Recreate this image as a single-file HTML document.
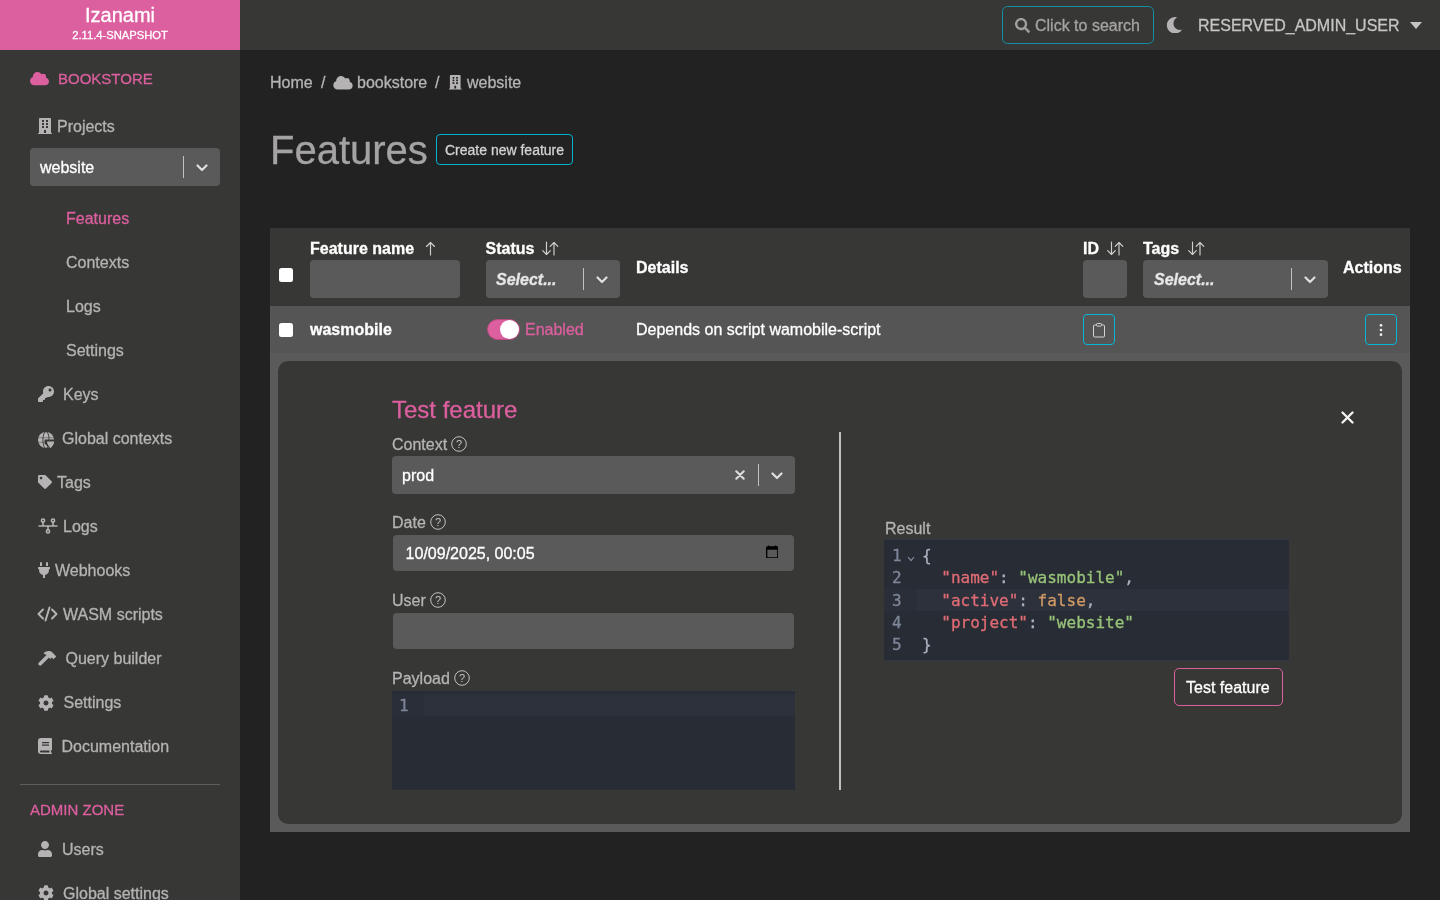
<!DOCTYPE html>
<html lang="en">
<head>
<meta charset="utf-8">
<title>Izanami</title>
<style>
*{box-sizing:border-box;margin:0;padding:0}
html,body{-webkit-text-stroke:0.300px currentColor;width:1440px;height:900px;overflow:hidden;background:#222222;font-family:"Liberation Sans",Arial,sans-serif;font-size:16px;color:#b5b3b3}
.abs{position:absolute}
#topbar{position:absolute;left:0;top:0;width:1440px;height:50px;background:#373735}
#brand{position:absolute;left:0;top:0;width:240px;height:50px;background:#dc5f9f;color:#fff;text-align:center}
#brand .n{position:absolute;left:0;width:240px;top:3px;font-size:20px;line-height:24px}
#brand .v{position:absolute;left:0;width:240px;top:28px;font-size:11.2px;line-height:14px}
#sidebar{position:absolute;left:0;top:50px;width:240px;height:850px;background:#373735}
#main{position:absolute;left:240px;top:50px;width:1200px;height:850px;background:#222222}
.t{position:absolute;white-space:nowrap;line-height:20px;height:20px}
.pink{color:#dc5f9f}
.w{color:#fff}
.b{font-weight:bold}
.ic{position:absolute;fill:#b5b3b3}
.inp{position:absolute;background:#5a5a5a;border-radius:4px}
.sep{position:absolute;width:1px;background:#c0c0c0}

.mono{font-family:"DejaVu Sans Mono","Liberation Mono",monospace;font-size:16px;line-height:22.400px;height:22.400px;white-space:pre}
.g{color:#7d8799}.f{color:#7d8799;font-size:11px}.p{color:#abb2bf}.k{color:#e06c75}.s{color:#98c379}.o{color:#d19a66}
#sb,#mn,#topbar{will-change:transform}
</style>
</head>
<body>
<div id="topbar">
  <div id="brand"><div class="n">Izanami</div><div class="v">2.11.4-SNAPSHOT</div></div>

  <div class="abs" style="left:1002px;top:6px;width:152px;height:38px;border:1px solid #148fa5;border-radius:5.500px"></div>
  <svg class="ic" style="left:1015px;top:18px;fill:#a09e9e" width="15" height="15" viewBox="0 0 512 512"><path d="M505 442.700L405.300 343c-4.500-4.500-10.600-7-17-7H372c27.600-35.300 44-79.700 44-128C416 93.100 322.900 0 208 0S0 93.100 0 208s93.100 208 208 208c48.300 0 92.700-16.400 128-44v16.300c0 6.400 2.500 12.500 7 17l99.700 99.700c9.400 9.400 24.600 9.400 33.900 0l28.300-28.300c9.400-9.400 9.400-24.600.1-34zM208 336c-70.700 0-128-57.200-128-128 0-70.700 57.200-128 128-128 70.700 0 128 57.200 128 128 0 70.700-57.200 128-128 128z"/></svg>
  <div class="t" style="left:1035px;top:16px;color:#a5a3a3">Click to search</div>
  <svg class="ic" style="left:1166.300px;top:16.700px" width="16.500" height="16.500" viewBox="0 0 512 512"><path d="M283.211 512c78.962 0 151.079-35.925 198.857-94.792 7.068-8.708-.639-21.430-11.562-19.350-124.203 23.654-238.262-71.576-238.262-196.954 0-72.222 38.662-138.635 101.498-174.394 9.686-5.512 7.250-20.197-3.756-22.230A258.156 258.156 0 0 0 283.211 0c-141.309 0-256 114.511-256 256 0 141.309 114.511 256 256 256z"/></svg>
  <div class="t" style="left:1198px;top:16px;color:#c6c4c4">RESERVED_ADMIN_USER</div>
  <div class="abs" style="left:1410px;top:22px;width:0;height:0;border-left:6px solid transparent;border-right:6px solid transparent;border-top:7px solid #c6c4c4"></div>
</div>
<div id="sidebar"></div>
<div id="sb">
<svg class="ic" style="left:30px;top:71px;fill:#dc5f9f" width="19" height="15.2" viewBox="0 0 640 512"><path d="M0 336c0 79.500 64.500 144 144 144H512c70.700 0 128-57.300 128-128c0-61.900-44-113.600-102.400-125.400c4.100-10.700 6.400-22.400 6.400-34.600c0-53-43-96-96-96c-19.700 0-38.100 6-53.300 16.200C367 64.200 315.300 32 256 32C167.600 32 96 103.600 96 192c0 2.700 .1 5.400 .2 8.100C40.200 219.800 0 273.200 0 336z"/></svg>
<div class="t pink" style="left:58px;top:68.500px;font-size:15px">BOOKSTORE</div>
<svg class="ic" style="left:38px;top:118px" width="14" height="16" viewBox="0 0 448 512"><path d="M436 480h-20V24c0-13.255-10.745-24-24-24H56C42.745 0 32 10.745 32 24v456H12c-6.627 0-12 5.373-12 12v20h448v-20c0-6.627-5.373-12-12-12zM128 76c0-6.627 5.373-12 12-12h40c6.627 0 12 5.373 12 12v40c0 6.627-5.373 12-12 12h-40c-6.627 0-12-5.373-12-12V76zm0 96c0-6.627 5.373-12 12-12h40c6.627 0 12 5.373 12 12v40c0 6.627-5.373 12-12 12h-40c-6.627 0-12-5.373-12-12v-40zm52 148h-40c-6.627 0-12-5.373-12-12v-40c0-6.627 5.373-12 12-12h40c6.627 0 12 5.373 12 12v40c0 6.627-5.373 12-12 12zm76 160h-64v-84c0-6.627 5.373-12 12-12h40c6.627 0 12 5.373 12 12v84zm64-172c0 6.627-5.373 12-12 12h-40c-6.627 0-12-5.373-12-12v-40c0-6.627 5.373-12 12-12h40c6.627 0 12 5.373 12 12v40zm0-96c0 6.627-5.373 12-12 12h-40c-6.627 0-12-5.373-12-12v-40c0-6.627 5.373-12 12-12h40c6.627 0 12 5.373 12 12v40zm0-96c0 6.627-5.373 12-12 12h-40c-6.627 0-12-5.373-12-12V76c0-6.627 5.373-12 12-12h40c6.627 0 12 5.373 12 12v40z"/></svg>
<div class="t " style="left:57px;top:117px;">Projects</div>
<div class="inp" style="left:30px;top:148px;width:190px;height:38px"></div>
<div class="t w" style="left:40px;top:158px;">website</div>
<div class="sep" style="left:183px;top:156px;height:22px"></div>
<svg class="abs" style="left:196px;top:163.500px" width="12" height="8" viewBox="0 0 12 8"><path d="M1.5 1.5 L6 6 L10.500 1.500" fill="none" stroke="#dedede" stroke-width="2.200" stroke-linecap="round" stroke-linejoin="round"/></svg>
<div class="t pink" style="left:66px;top:209px;">Features</div>
<div class="t " style="left:66px;top:253px;">Contexts</div>
<div class="t " style="left:66px;top:297px;">Logs</div>
<div class="t " style="left:66px;top:341px;">Settings</div>
<svg class="ic" style="left:38px;top:386px" width="16" height="16" viewBox="0 0 512 512"><path d="M512 176.001C512 273.203 433.202 352 336 352c-11.220 0-22.190-1.062-32.827-3.069l-24.012 27.014A23.999 23.999 0 0 1 261.223 384H224v40c0 13.255-10.745 24-24 24h-40v40c0 13.255-10.745 24-24 24H24c-13.255 0-24-10.745-24-24v-78.059c0-6.365 2.529-12.470 7.029-16.971l161.802-161.802C163.108 213.814 160 195.271 160 176 160 78.798 238.797.001 335.999 0 433.488-.001 512 78.511 512 176.001zM336 128c0 26.510 21.490 48 48 48s48-21.490 48-48-21.490-48-48-48-48 21.490-48 48z"/></svg>
<div class="t " style="left:63px;top:385px;">Keys</div>
<svg class="ic" style="left:38px;top:431.500px" width="16" height="16" viewBox="0 0 16 16"><circle cx="8" cy="8" r="8"/><g fill="none" stroke="#373735"><ellipse cx="8" cy="8" rx="3.100" ry="8.500" stroke-width="0.900"/><path d="M0 5.700h16M0 10.300h8" stroke-width="0.800" stroke-opacity="0.550"/></g><path d="M6.600 7.400h10v9H11.500L6.600 11.500z" fill="#373735"/><path d="M9 9.600h7.200c0 3-2.400 5.300-3.600 6.600c-1.200-1.300-3.600-3.600-3.600-6.600z"/></svg>
<div class="t " style="left:62px;top:429px;">Global contexts</div>
<svg class="ic" style="left:38px;top:475px" width="14" height="14" viewBox="0 0 512 512"><path d="M0 252.118V48C0 21.490 21.490 0 48 0h204.118a48 48 0 0 1 33.941 14.059l211.882 211.882c18.745 18.745 18.745 49.137 0 67.882L293.823 497.941c-18.745 18.745-49.137 18.745-67.882 0L14.059 286.059A48 48 0 0 1 0 252.118zM112 64c-26.510 0-48 21.490-48 48s21.490 48 48 48 48-21.490 48-48-21.490-48-48-48z"/></svg>
<div class="t " style="left:57px;top:473px;">Tags</div>
<svg class="abs" style="left:38px;top:518px" width="20" height="16" viewBox="0 0 20 16"><g fill="none" stroke="#b5b3b3" stroke-width="1.6"><path d="M0.5 8h19M5 3.500v4.500M15 3.500v4.500M10 8v4.500"/><circle cx="5" cy="2.600" r="1.600"/><circle cx="15" cy="2.600" r="1.600"/><circle cx="10" cy="13.400" r="1.600"/></g></svg>
<div class="t " style="left:63px;top:517px;">Logs</div>
<svg class="ic" style="left:38px;top:562px" width="12" height="16" viewBox="0 0 384 512"><path d="M320,32a32,32,0,0,0-64,0v96h64Zm48,128H16A16,16,0,0,0,0,176v32a16,16,0,0,0,16,16H32v32A160.070,160.070,0,0,0,160,412.800V512h64V412.800A160.070,160.070,0,0,0,352,256V224h16a16,16,0,0,0,16-16V176A16,16,0,0,0,368,160ZM128,32a32,32,0,0,0-64,0v96h64Z"/></svg>
<div class="t " style="left:55px;top:561px;">Webhooks</div>
<svg class="abs" style="left:37px;top:606px" width="21" height="16" viewBox="0 0 21 16"><path d="M6 3.500 L1.500 8 L6 12.500 M15 3.500 L19.500 8 L15 12.500 M12.500 1.500 L8.500 14.500" fill="none" stroke="#b5b3b3" stroke-width="2" stroke-linecap="round" stroke-linejoin="round"/></svg>
<div class="t " style="left:63px;top:605px;">WASM scripts</div>
<svg class="abs" style="left:38px;top:650px" width="19" height="16" viewBox="0 0 19 16"><path d="M2.200 13.800 L9 7" stroke="#b5b3b3" stroke-width="3.600" stroke-linecap="round"/><path d="M5.500 3.400 C8 0.300 12.200 0.300 14.200 2.300 L18.300 6.400 L15.400 9.300 L13.600 7.500 L12.200 8.900 L7.800 4.500 Z" fill="#b5b3b3"/></svg>
<div class="t " style="left:65.500px;top:649px;">Query builder</div>
<svg class="ic" style="left:38px;top:695px" width="16" height="16" viewBox="0 0 512 512"><path d="M487.4 315.7l-42.600-24.600c4.300-23.200 4.300-47 0-70.200l42.600-24.600c4.900-2.800 7.100-8.600 5.500-14-11.100-35.600-30-67.800-54.700-94.600-3.800-4.100-10-5.100-14.800-2.300L380.800 110c-17.900-15.400-38.500-27.300-60.800-35.100V25.800c0-5.600-3.900-10.500-9.400-11.700-36.700-8.200-74.300-7.800-109.200 0-5.500 1.200-9.400 6.100-9.400 11.700V75c-22.200 7.900-42.800 19.800-60.800 35.100L88.700 85.500c-4.900-2.800-11-1.900-14.800 2.300-24.700 26.700-43.600 58.900-54.700 94.600-1.700 5.400.6 11.200 5.500 14L67.300 221c-4.300 23.200-4.300 47 0 70.200l-42.600 24.600c-4.900 2.800-7.100 8.600-5.500 14 11.100 35.600 30 67.800 54.700 94.600 3.800 4.100 10 5.100 14.800 2.300l42.600-24.600c17.900 15.400 38.500 27.300 60.800 35.100v49.200c0 5.600 3.900 10.500 9.400 11.700 36.700 8.200 74.300 7.800 109.200 0 5.500-1.200 9.400-6.100 9.400-11.700v-49.200c22.200-7.900 42.800-19.800 60.800-35.100l42.600 24.600c4.900 2.800 11 1.900 14.800-2.300 24.700-26.700 43.600-58.900 54.700-94.600 1.500-5.500-.7-11.300-5.600-14.100zM256 336c-44.100 0-80-35.900-80-80s35.900-80 80-80 80 35.900 80 80-35.900 80-80 80z"/></svg>
<div class="t " style="left:63.500px;top:693px;">Settings</div>
<svg class="abs" style="left:38px;top:738px" width="14" height="16" viewBox="0 0 14 16"><path d="M3 0h10a1 1 0 0 1 1 1v10.500a1 1 0 0 1-1 1v2h.3a.7.7 0 0 1 0 1.500H3a3 3 0 0 1-3-3V3a3 3 0 0 1 3-3zM3 12.500a1 1 0 0 0 0 2h8.500v-2zM4 4v1.200h7V4zM4 6.500v1.200h7V6.500z" fill="#b5b3b3" fill-rule="evenodd"/></svg>
<div class="t " style="left:61.500px;top:737px;">Documentation</div>
<div class="abs" style="left:20px;top:784px;width:200px;height:1px;background:#5e5e5c"></div>
<div class="t pink" style="left:30px;top:799.500px;font-size:15px">ADMIN ZONE</div>
<svg class="ic" style="left:38px;top:841px" width="14" height="16" viewBox="0 0 448 512"><path d="M224 256c70.700 0 128-57.300 128-128S294.700 0 224 0 96 57.300 96 128s57.300 128 128 128zm89.600 32h-16.700c-22.200 10.200-46.900 16-72.900 16s-50.600-5.800-72.900-16h-16.700C60.200 288 0 348.200 0 422.400V464c0 26.500 21.500 48 48 48h352c26.500 0 48-21.500 48-48v-41.600c0-74.200-60.200-134.400-134.400-134.400z"/></svg>
<div class="t " style="left:62px;top:840px;">Users</div>
<svg class="ic" style="left:38px;top:885px" width="16" height="16" viewBox="0 0 512 512"><path d="M487.4 315.7l-42.600-24.600c4.300-23.200 4.300-47 0-70.200l42.600-24.600c4.900-2.800 7.100-8.600 5.500-14-11.100-35.600-30-67.800-54.700-94.600-3.800-4.100-10-5.100-14.800-2.300L380.800 110c-17.900-15.400-38.500-27.300-60.800-35.100V25.800c0-5.600-3.900-10.500-9.400-11.700-36.700-8.200-74.300-7.800-109.200 0-5.500 1.200-9.400 6.100-9.400 11.700V75c-22.200 7.900-42.800 19.800-60.800 35.100L88.700 85.500c-4.900-2.800-11-1.900-14.800 2.300-24.700 26.700-43.600 58.900-54.700 94.600-1.700 5.400.6 11.200 5.500 14L67.300 221c-4.300 23.200-4.300 47 0 70.200l-42.600 24.600c-4.900 2.800-7.100 8.600-5.500 14 11.100 35.600 30 67.800 54.700 94.600 3.800 4.100 10 5.100 14.800 2.300l42.600-24.600c17.900 15.400 38.500 27.300 60.800 35.100v49.200c0 5.600 3.900 10.500 9.400 11.700 36.700 8.200 74.300 7.800 109.200 0 5.500-1.200 9.400-6.100 9.400-11.700v-49.200c22.200-7.900 42.800-19.800 60.800-35.100l42.600 24.600c4.900 2.800 11 1.900 14.800-2.300 24.700-26.700 43.600-58.900 54.700-94.600 1.500-5.500-.7-11.300-5.600-14.100zM256 336c-44.100 0-80-35.900-80-80s35.900-80 80-80 80 35.900 80 80-35.900 80-80 80z"/></svg>
<div class="t " style="left:63px;top:884px;">Global settings</div>
</div>
<div id="main"></div>
<div id="mn">
<div class="t " style="left:270px;top:73px;">Home</div>
<div class="t " style="left:321px;top:73px;">/</div>
<svg class="ic" style="left:333px;top:75px" width="20" height="15.500" viewBox="0 0 640 512"><path d="M0 336c0 79.500 64.500 144 144 144H512c70.700 0 128-57.300 128-128c0-61.900-44-113.600-102.400-125.400c4.100-10.700 6.400-22.400 6.400-34.600c0-53-43-96-96-96c-19.700 0-38.100 6-53.300 16.200C367 64.200 315.300 32 256 32C167.600 32 96 103.600 96 192c0 2.700 .1 5.400 .2 8.100C40.200 219.800 0 273.200 0 336z"/></svg>
<div class="t " style="left:357px;top:73px;">bookstore</div>
<div class="t " style="left:435px;top:73px;">/</div>
<svg class="ic" style="left:449px;top:75px" width="12.500" height="14.500" viewBox="0 0 448 512"><path d="M436 480h-20V24c0-13.255-10.745-24-24-24H56C42.745 0 32 10.745 32 24v456H12c-6.627 0-12 5.373-12 12v20h448v-20c0-6.627-5.373-12-12-12zM128 76c0-6.627 5.373-12 12-12h40c6.627 0 12 5.373 12 12v40c0 6.627-5.373 12-12 12h-40c-6.627 0-12-5.373-12-12V76zm0 96c0-6.627 5.373-12 12-12h40c6.627 0 12 5.373 12 12v40c0 6.627-5.373 12-12 12h-40c-6.627 0-12-5.373-12-12v-40zm52 148h-40c-6.627 0-12-5.373-12-12v-40c0-6.627 5.373-12 12-12h40c6.627 0 12 5.373 12 12v40c0 6.627-5.373 12-12 12zm76 160h-64v-84c0-6.627 5.373-12 12-12h40c6.627 0 12 5.373 12 12v84zm64-172c0 6.627-5.373 12-12 12h-40c-6.627 0-12-5.373-12-12v-40c0-6.627 5.373-12 12-12h40c6.627 0 12 5.373 12 12v40zm0-96c0 6.627-5.373 12-12 12h-40c-6.627 0-12-5.373-12-12v-40c0-6.627 5.373-12 12-12h40c6.627 0 12 5.373 12 12v40zm0-96c0 6.627-5.373 12-12 12h-40c-6.627 0-12-5.373-12-12V76c0-6.627 5.373-12 12-12h40c6.627 0 12 5.373 12 12v40z"/></svg>
<div class="t " style="left:467px;top:73px;">website</div>
<div class="t" style="left:270px;top:126px;font-size:40px;line-height:48px;height:48px;color:#a4a2a2">Features</div>
<div class="abs" style="left:436px;top:134px;width:137px;height:31px;border:1px solid #00b2ce;border-radius:4px"></div>
<div class="t " style="left:445px;top:140px;font-size:14px;color:#d2d2d2">Create new feature</div>
<div class="abs" style="left:270px;top:228px;width:1140px;height:78px;background:#373735"></div>
<div class="abs" style="left:270px;top:306px;width:1140px;height:47px;background:#555555"></div>
<div class="abs" style="left:270px;top:353px;width:1140px;height:479px;background:#5a5a5a"></div>
<div class="abs" style="left:278px;top:361px;width:1124px;height:463px;background:#373735;border-radius:10px"></div>
<div class="abs" style="left:279px;top:268px;width:14px;height:14px;background:#fff;border-radius:2.500px"></div>
<div class="t w b" style="left:310px;top:239px;">Feature name</div>
<svg class="abs" style="left:424.500px;top:241px" width="11" height="15" viewBox="0 0 11 15"><path d="M5.500 14V1.500M1.500 5.500L5.500 1.500L9.500 5.500" fill="none" stroke="#d0d0d0" stroke-width="1.150" stroke-linecap="round" stroke-linejoin="round"/></svg>
<div class="inp" style="left:310px;top:260px;width:150px;height:38px"></div>
<div class="t w b" style="left:485.500px;top:239px;">Status</div>
<svg class="abs" style="left:542px;top:241px" width="18" height="15" viewBox="0 0 18 15"><path d="M4.500 1v12.500M0.700 9.700L4.500 13.500L8.300 9.700M12 14V1.500M8.200 5.300L12 1.500L15.800 5.300" fill="none" stroke="#d0d0d0" stroke-width="1.150" stroke-linecap="round" stroke-linejoin="round"/></svg>
<div class="inp" style="left:485.500px;top:260px;width:134px;height:38px"></div>
<div class="t b" style="left:496px;top:270px;font-style:italic;color:#e6e6e6">Select...</div>
<div class="sep" style="left:582.500px;top:268px;height:22px"></div>
<svg class="abs" style="left:595.700px;top:275.800px" width="12" height="8" viewBox="0 0 12 8"><path d="M1.500 1.500 L6 6 L10.500 1.500" fill="none" stroke="#dedede" stroke-width="2.200" stroke-linecap="round" stroke-linejoin="round"/></svg>
<div class="t w b" style="left:636px;top:258px;">Details</div>
<div class="t w b" style="left:1083px;top:239px;">ID</div>
<svg class="abs" style="left:1107px;top:241px" width="18" height="15" viewBox="0 0 18 15"><path d="M4.500 1v12.500M0.700 9.700L4.500 13.500L8.300 9.700M12 14V1.500M8.200 5.300L12 1.500L15.800 5.300" fill="none" stroke="#d0d0d0" stroke-width="1.150" stroke-linecap="round" stroke-linejoin="round"/></svg>
<div class="inp" style="left:1083.200px;top:260px;width:44.300px;height:38px"></div>
<div class="t w b" style="left:1143px;top:239px;">Tags</div>
<svg class="abs" style="left:1187.500px;top:241px" width="18" height="15" viewBox="0 0 18 15"><path d="M4.500 1v12.500M0.700 9.700L4.500 13.500L8.300 9.700M12 14V1.500M8.200 5.300L12 1.500L15.800 5.300" fill="none" stroke="#d0d0d0" stroke-width="1.150" stroke-linecap="round" stroke-linejoin="round"/></svg>
<div class="inp" style="left:1143.400px;top:260px;width:184.300px;height:38px"></div>
<div class="t b" style="left:1154px;top:270px;font-style:italic;color:#e6e6e6">Select...</div>
<div class="sep" style="left:1291px;top:268px;height:22px"></div>
<svg class="abs" style="left:1303.500px;top:275.800px" width="12" height="8" viewBox="0 0 12 8"><path d="M1.500 1.500 L6 6 L10.500 1.500" fill="none" stroke="#dedede" stroke-width="2.200" stroke-linecap="round" stroke-linejoin="round"/></svg>
<div class="t w b" style="left:1343px;top:258px;">Actions</div>
<div class="abs" style="left:279px;top:323px;width:14px;height:14px;background:#fff;border-radius:2.500px"></div>
<div class="t w b" style="left:310px;top:320px;">wasmobile</div>
<div class="abs" style="left:486.500px;top:319px;width:33px;height:20.500px;background:#dc5f9f;border:1px solid #b84a82;border-radius:11px"></div>
<div class="abs" style="left:499.500px;top:319.500px;width:19.500px;height:19.500px;background:#fff;border-radius:10px"></div>
<div class="t pink" style="left:525px;top:320px;">Enabled</div>
<div class="t w" style="left:636px;top:320px;">Depends on script wamobile-script</div>
<div class="abs" style="left:1083.200px;top:314px;width:32px;height:31px;border:1px solid #00b8d6;border-radius:4px"></div>
<svg class="abs" style="left:1092.200px;top:321.500px" width="14" height="16" viewBox="0 0 14 16"><path d="M4.500 3H2.500A1 1 0 0 0 1.500 4V14A1 1 0 0 0 2.500 15H11.500A1 1 0 0 0 12.500 14V4A1 1 0 0 0 11.500 3H9.500" fill="none" stroke="#d4d4d4" stroke-width="1"/><rect x="4.500" y="1.500" width="5" height="2.600" rx="0.800" fill="none" stroke="#d4d4d4" stroke-width="1"/></svg>
<div class="abs" style="left:1365px;top:314px;width:32px;height:31px;border:1px solid #00b8d6;border-radius:4px"></div>
<svg class="abs" style="left:1379px;top:323px" width="4" height="14" viewBox="0 0 4 14"><circle cx="2" cy="2.300" r="1.350" fill="#f0f0f0"/><circle cx="2" cy="7" r="1.350" fill="#f0f0f0"/><circle cx="2" cy="11.700" r="1.350" fill="#f0f0f0"/></svg>
<div class="t pink" style="left:392px;top:395px;font-size:24px;line-height:30px;height:30px">Test feature</div>
<div class="t " style="left:392px;top:435px;">Context</div>
<svg class="abs" style="left:451px;top:436px" width="16" height="16" viewBox="0 0 16 16"><circle cx="8" cy="8" r="7.300" fill="none" stroke="#c4c2c2" stroke-width="1"/><text x="8" y="11.800" text-anchor="middle" font-family="Liberation Sans, sans-serif" font-size="11" fill="#c4c2c2">?</text></svg>
<div class="inp" style="left:392px;top:456px;width:403px;height:38px"></div>
<div class="t w" style="left:402px;top:466px;">prod</div>
<svg class="abs" style="left:735px;top:470px" width="10" height="10" viewBox="0 0 10 10"><path d="M1.300 1.300L8.700 8.700M8.700 1.300L1.300 8.700" stroke="#dcdcdc" stroke-width="2.100" stroke-linecap="round"/></svg>
<div class="sep" style="left:758px;top:464px;height:22px"></div>
<svg class="abs" style="left:771px;top:471.500px" width="12" height="8" viewBox="0 0 12 8"><path d="M1.500 1.500 L6 6 L10.500 1.500" fill="none" stroke="#dedede" stroke-width="2.200" stroke-linecap="round" stroke-linejoin="round"/></svg>
<div class="t " style="left:392px;top:513px;">Date</div>
<svg class="abs" style="left:430px;top:514px" width="16" height="16" viewBox="0 0 16 16"><circle cx="8" cy="8" r="7.300" fill="none" stroke="#c4c2c2" stroke-width="1"/><text x="8" y="11.800" text-anchor="middle" font-family="Liberation Sans, sans-serif" font-size="11" fill="#c4c2c2">?</text></svg>
<div class="inp" style="left:393px;top:535px;width:401px;height:36px"></div>
<div class="t w" style="left:405.600px;top:543.500px;font-size:16px">10/09/2025, 00:05</div>
<svg class="abs" style="left:765.700px;top:544.800px" width="12.500" height="13.500" viewBox="0 0 13 14"><path d="M3 0.500v2M10 0.500v2" stroke="#000" stroke-width="1.400"/><rect x="0.700" y="1.900" width="11.600" height="11.400" rx="1" fill="none" stroke="#000" stroke-width="1.400"/><rect x="0.700" y="1.900" width="11.600" height="3" fill="#000"/></svg>
<div class="t " style="left:392px;top:591px;">User</div>
<svg class="abs" style="left:430px;top:592px" width="16" height="16" viewBox="0 0 16 16"><circle cx="8" cy="8" r="7.300" fill="none" stroke="#c4c2c2" stroke-width="1"/><text x="8" y="11.800" text-anchor="middle" font-family="Liberation Sans, sans-serif" font-size="11" fill="#c4c2c2">?</text></svg>
<div class="inp" style="left:393px;top:613px;width:401px;height:36px"></div>
<div class="t " style="left:392px;top:669px;">Payload</div>
<svg class="abs" style="left:454px;top:670px" width="16" height="16" viewBox="0 0 16 16"><circle cx="8" cy="8" r="7.300" fill="none" stroke="#c4c2c2" stroke-width="1"/><text x="8" y="11.800" text-anchor="middle" font-family="Liberation Sans, sans-serif" font-size="11" fill="#c4c2c2">?</text></svg>
<div class="abs" style="left:392px;top:690px;width:403px;height:100px;background:#282c34;border-top:1px dotted #3a3f4a"></div>
<div class="abs" style="left:392px;top:694px;width:403px;height:22.400px;background:#2c313c"></div>
<div class="abs" style="left:392px;top:694px;width:31.500px;height:22.400px;background:#2a2e38"></div>
<div class="t mono" style="left:399px;top:695px;color:#7d8799">1</div>
<div class="abs" style="left:839px;top:432px;width:2px;height:358px;background:#c0c0c0"></div>
<div class="t " style="left:885px;top:519px;">Result</div>
<div class="abs" style="left:884px;top:539px;width:405px;height:122px;background:#282c34;border-top:1px dotted #3a3f4a;border-bottom:1px dotted #3a3f4a"></div>
<div class="abs" style="left:884px;top:588.800px;width:405px;height:22.400px;background:#2c313c"></div>
<div class="abs" style="left:884px;top:588.800px;width:33px;height:22.400px;background:#2a2e38"></div>
<div class="t mono g" style="left:892px;top:544.7px">1</div>
<div class="t mono" style="left:922px;top:544.7px"><span class="p">{</span></div>
<div class="t mono g" style="left:892px;top:567.1px">2</div>
<div class="t mono" style="left:922px;top:567.1px">  <span class="k">"name"</span><span class="p">: </span><span class="s">"wasmobile"</span><span class="p">,</span></div>
<div class="t mono g" style="left:892px;top:589.5px">3</div>
<div class="t mono" style="left:922px;top:589.5px">  <span class="k">"active"</span><span class="p">: </span><span class="o">false</span><span class="p">,</span></div>
<div class="t mono g" style="left:892px;top:611.9px">4</div>
<div class="t mono" style="left:922px;top:611.9px">  <span class="k">"project"</span><span class="p">: </span><span class="s">"website"</span></div>
<div class="t mono g" style="left:892px;top:634.3px">5</div>
<div class="t mono" style="left:922px;top:634.3px"><span class="p">}</span></div>
<svg class="abs" style="left:907px;top:556px" width="8" height="6" viewBox="0 0 8 6"><path d="M1 1.200L4 4.500L7 1.200" fill="none" stroke="#7d8799" stroke-width="1.200"/></svg>
<div class="abs" style="left:1173.500px;top:668px;width:109.500px;height:38px;border:1px solid #dc5f9f;border-radius:5px"></div>
<div class="t w" style="left:1186px;top:678px;">Test feature</div>
<svg class="abs" style="left:1341px;top:411px" width="13" height="13" viewBox="0 0 13 13"><path d="M1.500 1.500L11.500 11.500M11.500 1.500L1.500 11.500" stroke="#f4f4f4" stroke-width="2.300" stroke-linecap="round"/></svg>
</div>
</body>
</html>
